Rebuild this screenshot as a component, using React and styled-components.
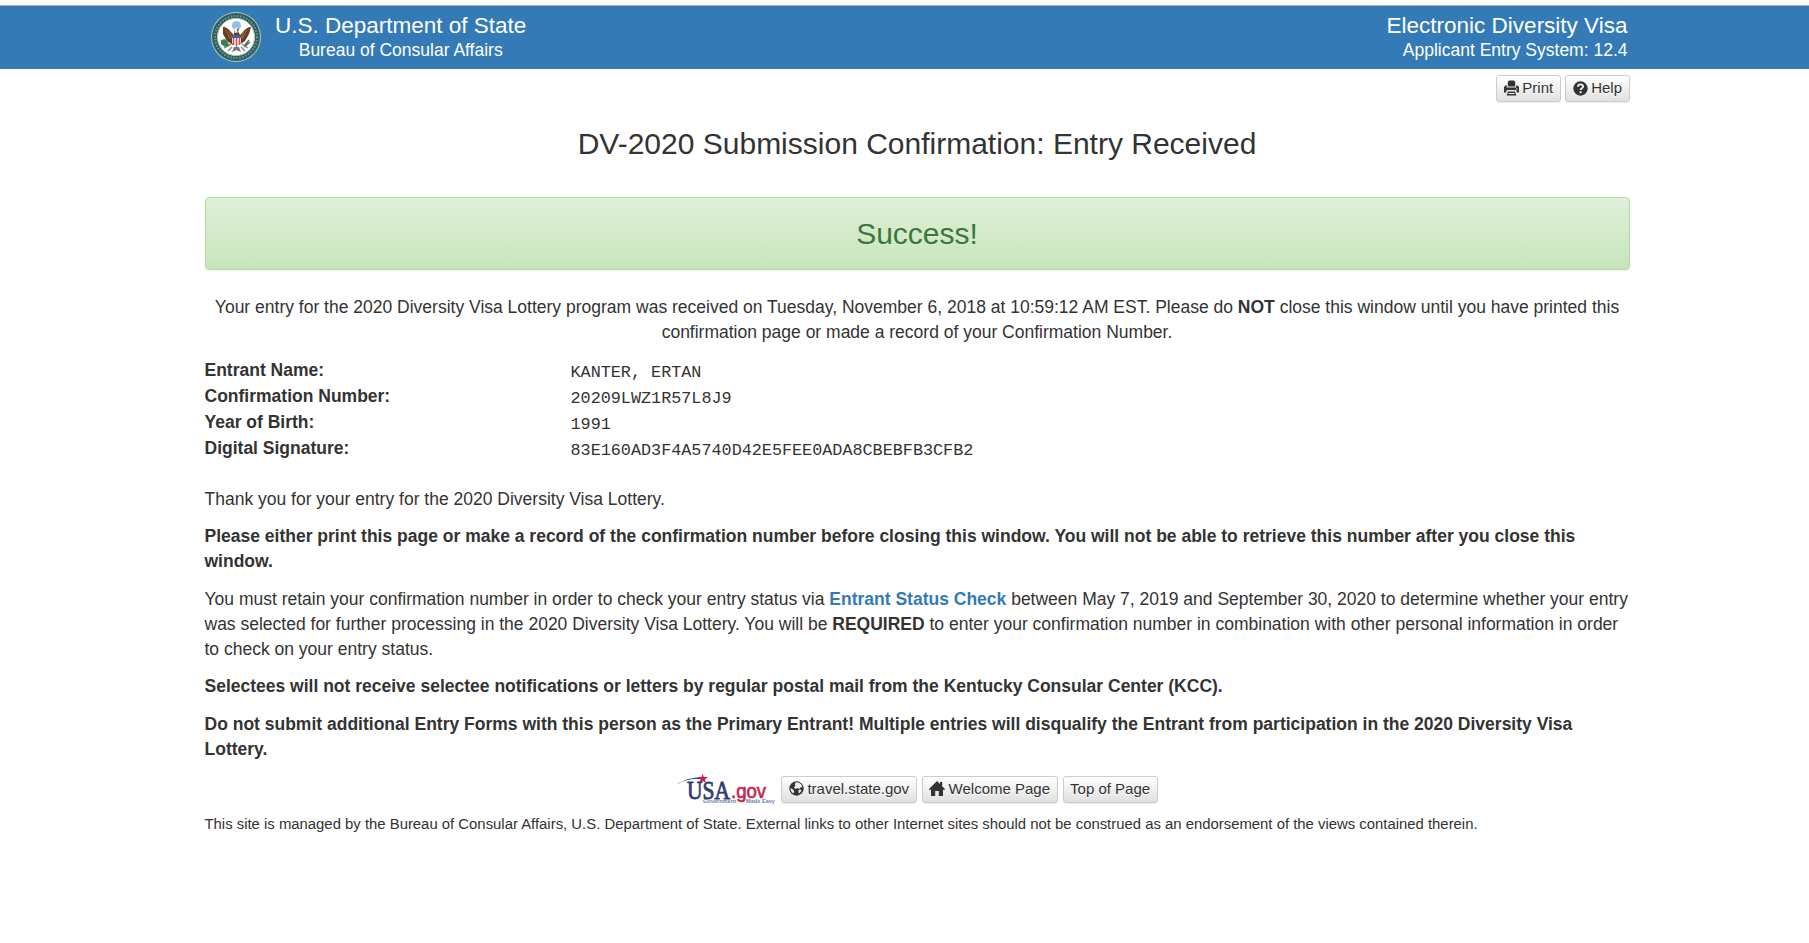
import React from "react";
import styled, { createGlobalStyle, css } from "styled-components";

const Global = createGlobalStyle`
  *, *::before, *::after { box-sizing: border-box; }
  body {
    margin: 0;
    background: #fff;
    color: #333;
    font: 17.5px/25px "Liberation Sans", Arial, sans-serif;
  }
`;

const Header = styled.header`
  margin-top: 5px;
  height: 64px;
  border-top: 1px solid #a9b0b5;
  background: #337ab7;
  color: #fff;
`;

const Container = styled.div`
  width: 1425px;
  margin: 0 auto 0 204.5px;
`;

const HeaderInner = styled(Container)`
  display: flex;
  justify-content: space-between;
  padding: 6px 2px 0 6.5px;
`;

const Brand = styled.div`
  display: flex;
  gap: 14px;
`;

const Titles = styled.div`
  display: flex;
  flex-direction: column;
  align-items: ${(p) => p.$align};
  padding-top: 1px;
`;

const Title = styled.div`
  font-size: 22.5px;
  line-height: 25px;
  white-space: nowrap;
`;

const Subtitle = styled.div`
  font-size: 17.5px;
  line-height: 25px;
  white-space: nowrap;
`;

const Tools = styled.div`
  display: flex;
  justify-content: flex-end;
  gap: 4.5px;
  padding-top: 6px;
`;

const Button = styled.button`
  display: inline-flex;
  align-items: center;
  gap: 3.5px;
  height: 27px;
  padding: 0 6.5px 1px;
  border: 1px solid #ccc;
  border-radius: 3px;
  background: linear-gradient(#fff, #e0e0e0);
  box-shadow: inset 0 1px 0 rgba(255, 255, 255, 0.15), 0 1px 1px rgba(0, 0, 0, 0.075);
  color: #333;
  font: 15px/22px "Liberation Sans", Arial, sans-serif;
  text-shadow: 0 1px 0 #fff;
  white-space: nowrap;
  svg { flex: none; }
`;

const headline = css`
  margin: 0;
  font-size: 30px;
  font-weight: 400;
  line-height: 34px;
  text-align: center;
`;

const Heading = styled.h1`
  ${headline}
  padding-top: 25px;
`;

const Alert = styled.div`
  display: flex;
  align-items: center;
  justify-content: center;
  height: 73px;
  margin-top: 36px;
  border: 1px solid #b2dba1;
  border-radius: 4px;
  background: linear-gradient(#dff0d8, #c8e5bc);
  box-shadow: inset 0 1px 0 rgba(255, 255, 255, 0.25), 0 1px 2px rgba(0, 0, 0, 0.05);
  color: #3c763d;
  text-shadow: 0 1px 0 rgba(255, 255, 255, 0.2);
`;

const AlertText = styled.h2`
  ${headline}
`;

const Paragraph = styled.p`
  margin: 0 0 12.5px;
  font-weight: ${(p) => (p.$bold ? 700 : 400)};
`;

const Intro = styled(Paragraph)`
  margin-top: 25px;
  text-align: center;
`;

const Details = styled.dl`
  display: grid;
  grid-template-columns: 366px 1fr;
  grid-auto-rows: 26px;
  margin: 0 0 25px;
`;

const Term = styled.dt`
  font-weight: 700;
`;

const Value = styled.dd`
  margin: 0;
  padding-top: 3px;
  font-family: "Liberation Mono", monospace;
  font-size: 16.8px;
  line-height: 23px;
`;

const StatusLink = styled.a`
  color: #337ab7;
  font-weight: 700;
  text-decoration: none;
`;

const FooterLinks = styled.div`
  display: flex;
  justify-content: center;
  align-items: center;
  gap: 5px;
  height: 32px;
  margin-top: -1px;
  padding-left: 1px;
`;

const Notice = styled.p`
  margin: 8px 0 0;
  font-size: 14.88px;
  line-height: 22px;
`;

const Seal = () => (
  <svg width="50" height="50" viewBox="0 0 50 50">
    <circle cx="25" cy="25" r="25" fill="#c5c98f" />
    <circle cx="25" cy="25" r="24" fill="#245d72" />
    <circle cx="25" cy="25" r="21" fill="none" stroke="#6f957c" strokeWidth="2.2" strokeDasharray="1.6 1.5" />
    <circle cx="25" cy="25" r="18.6" fill="#fff" stroke="#c9c48a" strokeWidth="1" />
    <circle cx="25.5" cy="13.5" r="4.6" fill="#8fc3e6" />
    <path d="M12 15c3 0 6 2 8 5l3 3v-4l2-3 3 1-1 2 2 4 3-3c2-3 5-5 8-5l-2 7-4 7-6 4h-6l-6-4-4-7z" fill="#653b22" />
    <path d="M15 18l4 9M36 18l-5 9M18 19l3 7M33 19l-3 7" stroke="#a87846" strokeWidth="0.9" />
    <path d="M23.2 17.8l1-2.4 3 .8-1.2 1.5.7 3h-3.2z" fill="#f2eee5" />
    <path d="M21 23h9v3h-9z" fill="#3f64a3" />
    <path d="M21 26h9v5l-4.500 4-4.500-4z" fill="#f3c3c5" />
    <path d="M22.500 26v7M25.500 26v9M28.500 26v7" stroke="#c75360" />
    <path d="M20 32l-7 4M21 35l-4 4M31 32l6 4M30 35l4 4" stroke="#858b83" strokeWidth="1.5" />
    <path d="M10 28l4-1 3 3 1 4-4 1-4-3z" fill="#3c8051" />
    <path d="M34 33l4-5M33 35l6-5" stroke="#55606a" strokeWidth="1.3" />
    <path d="M23 35h5l2 5-4.500-2-4.500 2z" fill="#737a73" />
  </svg>
);

const PrintIcon = () => (
  <svg width="15" height="16" viewBox="0 0 15 16" fill="#333">
    <path d="M5 .5h5l1.200 1.500V6.500H3.800V2z" />
    <path d="M0 7l1.500-1.500h1.300v2h9.400v-2h1.300L15 7v5.500h-2l-.8-2.500H2.800L2 12.500H0z" />
    <path d="M4 11.500h7l1.300 4H2.700z" />
    <path d="M4.500 13.500h6" stroke="#eee" />
    <path d="M12 9h1.500" stroke="#eee" />
  </svg>
);

const HelpIcon = () => (
  <svg width="15" height="15" viewBox="0 0 15 15">
    <circle cx="7.500" cy="7.500" r="7.200" fill="#333" />
    <path d="M5 5.700C5.100 2.700 10.100 2.700 10.100 5.500C10.100 7.200 7.600 7.200 7.600 9" fill="none" stroke="#f4f4f4" strokeWidth="1.900" />
    <path d="M6.600 10.200h2v2h-2z" fill="#eee" />
  </svg>
);

const GlobeIcon = () => (
  <svg width="15" height="15" viewBox="0 0 15 15">
    <circle cx="7.500" cy="7.500" r="7.200" fill="#333" />
    <path d="M6.500 1.600l3-.1 2.500 1.500 1.500 3-1.700.3-1.500 1.800-2.200-1.200L6.500 8 4.800 6.400l1.700-1.600-.8-1.300zM1.500 7l2.200 1.200 1.500 1.800-.6 2.500A6 6 0 0 1 1.500 7zM9.500 9l2-.5 1 .8-1.200 2.200-1.600 1z" fill="#eee" />
  </svg>
);

const HomeIcon = () => (
  <svg width="16" height="15" viewBox="0 0 16 15" fill="#333">
    <path d="M8 0l3 3V1h2.200v4.200L16 8v.7h-2V15H9.800v-5H6.200v5H2V8.700H0V8z" />
  </svg>
);

const UsaGovLogo = () => (
  <svg width="99" height="31" viewBox="0 0 99 31">
    <path d="M0 10C8 5 17 3 24 3.500L22.500 5C14 4.500 8 6 0 10z" fill="#34477e" />
    <path d="M25.500 0l1.400 3.100 4-.1-3 2.400 1.100 3.600-3.300-2-3.300 2.200 1.100-3.800L20.500 3h4z" fill="#cf1f40" />
    <text x="10" y="24.500" fontFamily="Liberation Serif" fontSize="25" textLength="43" lengthAdjust="spacingAndGlyphs" fill="#343a76" stroke="#343a76" strokeWidth=".8">USA</text>
    <text x="54" y="24" fontFamily="Liberation Sans" fontSize="20" textLength="35" lengthAdjust="spacingAndGlyphs" fill="#c32a50" stroke="#c32a50" strokeWidth=".7">.gov</text>
    <text x="26" y="28.500" fontFamily="Liberation Sans" fontWeight="700" fontSize="5" textLength="33" lengthAdjust="spacingAndGlyphs" fill="#7380aa">Government</text>
    <text x="69" y="28.500" fontFamily="Liberation Sans" fontWeight="700" fontSize="5" textLength="29" lengthAdjust="spacingAndGlyphs" fill="#7380aa">Made Easy</text>
  </svg>
);

const entry = [
  ["Entrant Name:", "KANTER, ERTAN"],
  ["Confirmation Number:", "20209LWZ1R57L8J9"],
  ["Year of Birth:", "1991"],
  ["Digital Signature:", "83E160AD3F4A5740D42E5FEE0ADA8CBEBFB3CFB2"],
];

export default function App() {
  return (
    <>
      <Global />
      <Header>
        <HeaderInner>
          <Brand>
            <Seal />
            <Titles $align="center">
              <Title>U.S. Department of State</Title>
              <Subtitle>Bureau of Consular Affairs</Subtitle>
            </Titles>
          </Brand>
          <Titles $align="flex-end">
            <Title>Electronic Diversity Visa</Title>
            <Subtitle>Applicant Entry System: 12.4</Subtitle>
          </Titles>
        </HeaderInner>
      </Header>
      <Container as="main">
        <Tools>
          <Button><PrintIcon />Print</Button>
          <Button><HelpIcon />Help</Button>
        </Tools>
        <Heading>DV-2020 Submission Confirmation: Entry Received</Heading>
        <Alert><AlertText>Success!</AlertText></Alert>
        <Intro>
          Your entry for the 2020 Diversity Visa Lottery program was received on Tuesday, November 6, 2018 at
          10:59:12 AM EST. Please do <b>NOT</b> close this window until you have printed this confirmation page or
          made a record of your Confirmation Number.
        </Intro>
        <Details>
          {entry.map(([term, value]) => (
            <React.Fragment key={term}>
              <Term>{term}</Term>
              <Value>{value}</Value>
            </React.Fragment>
          ))}
        </Details>
        <Paragraph>Thank you for your entry for the 2020 Diversity Visa Lottery.</Paragraph>
        <Paragraph $bold>
          Please either print this page or make a record of the confirmation number before closing this window. You
          will not be able to retrieve this number after you close this window.
        </Paragraph>
        <Paragraph>
          You must retain your confirmation number in order to check your entry status via{" "}
          <StatusLink>Entrant Status Check</StatusLink> between May 7, 2019 and September 30, 2020 to determine
          whether your entry was selected for further processing in the 2020 Diversity Visa Lottery. You will
          be <b>REQUIRED</b> to enter your confirmation number in combination with other personal information in
          order to check on your entry status.
        </Paragraph>
        <Paragraph $bold>
          Selectees will not receive selectee notifications or letters by regular postal mail from the Kentucky
          Consular Center (KCC).
        </Paragraph>
        <Paragraph $bold>
          Do not submit additional Entry Forms with this person as the Primary Entrant! Multiple entries will
          disqualify the Entrant from participation in the 2020 Diversity Visa Lottery.
        </Paragraph>
        <FooterLinks>
          <UsaGovLogo />
          <Button><GlobeIcon />travel.state.gov</Button>
          <Button><HomeIcon />Welcome Page</Button>
          <Button>Top of Page</Button>
        </FooterLinks>
        <Notice>
          This site is managed by the Bureau of Consular Affairs, U.S. Department of State. External links to other
          Internet sites should not be construed as an endorsement of the views contained therein.
        </Notice>
      </Container>
    </>
  );
}
